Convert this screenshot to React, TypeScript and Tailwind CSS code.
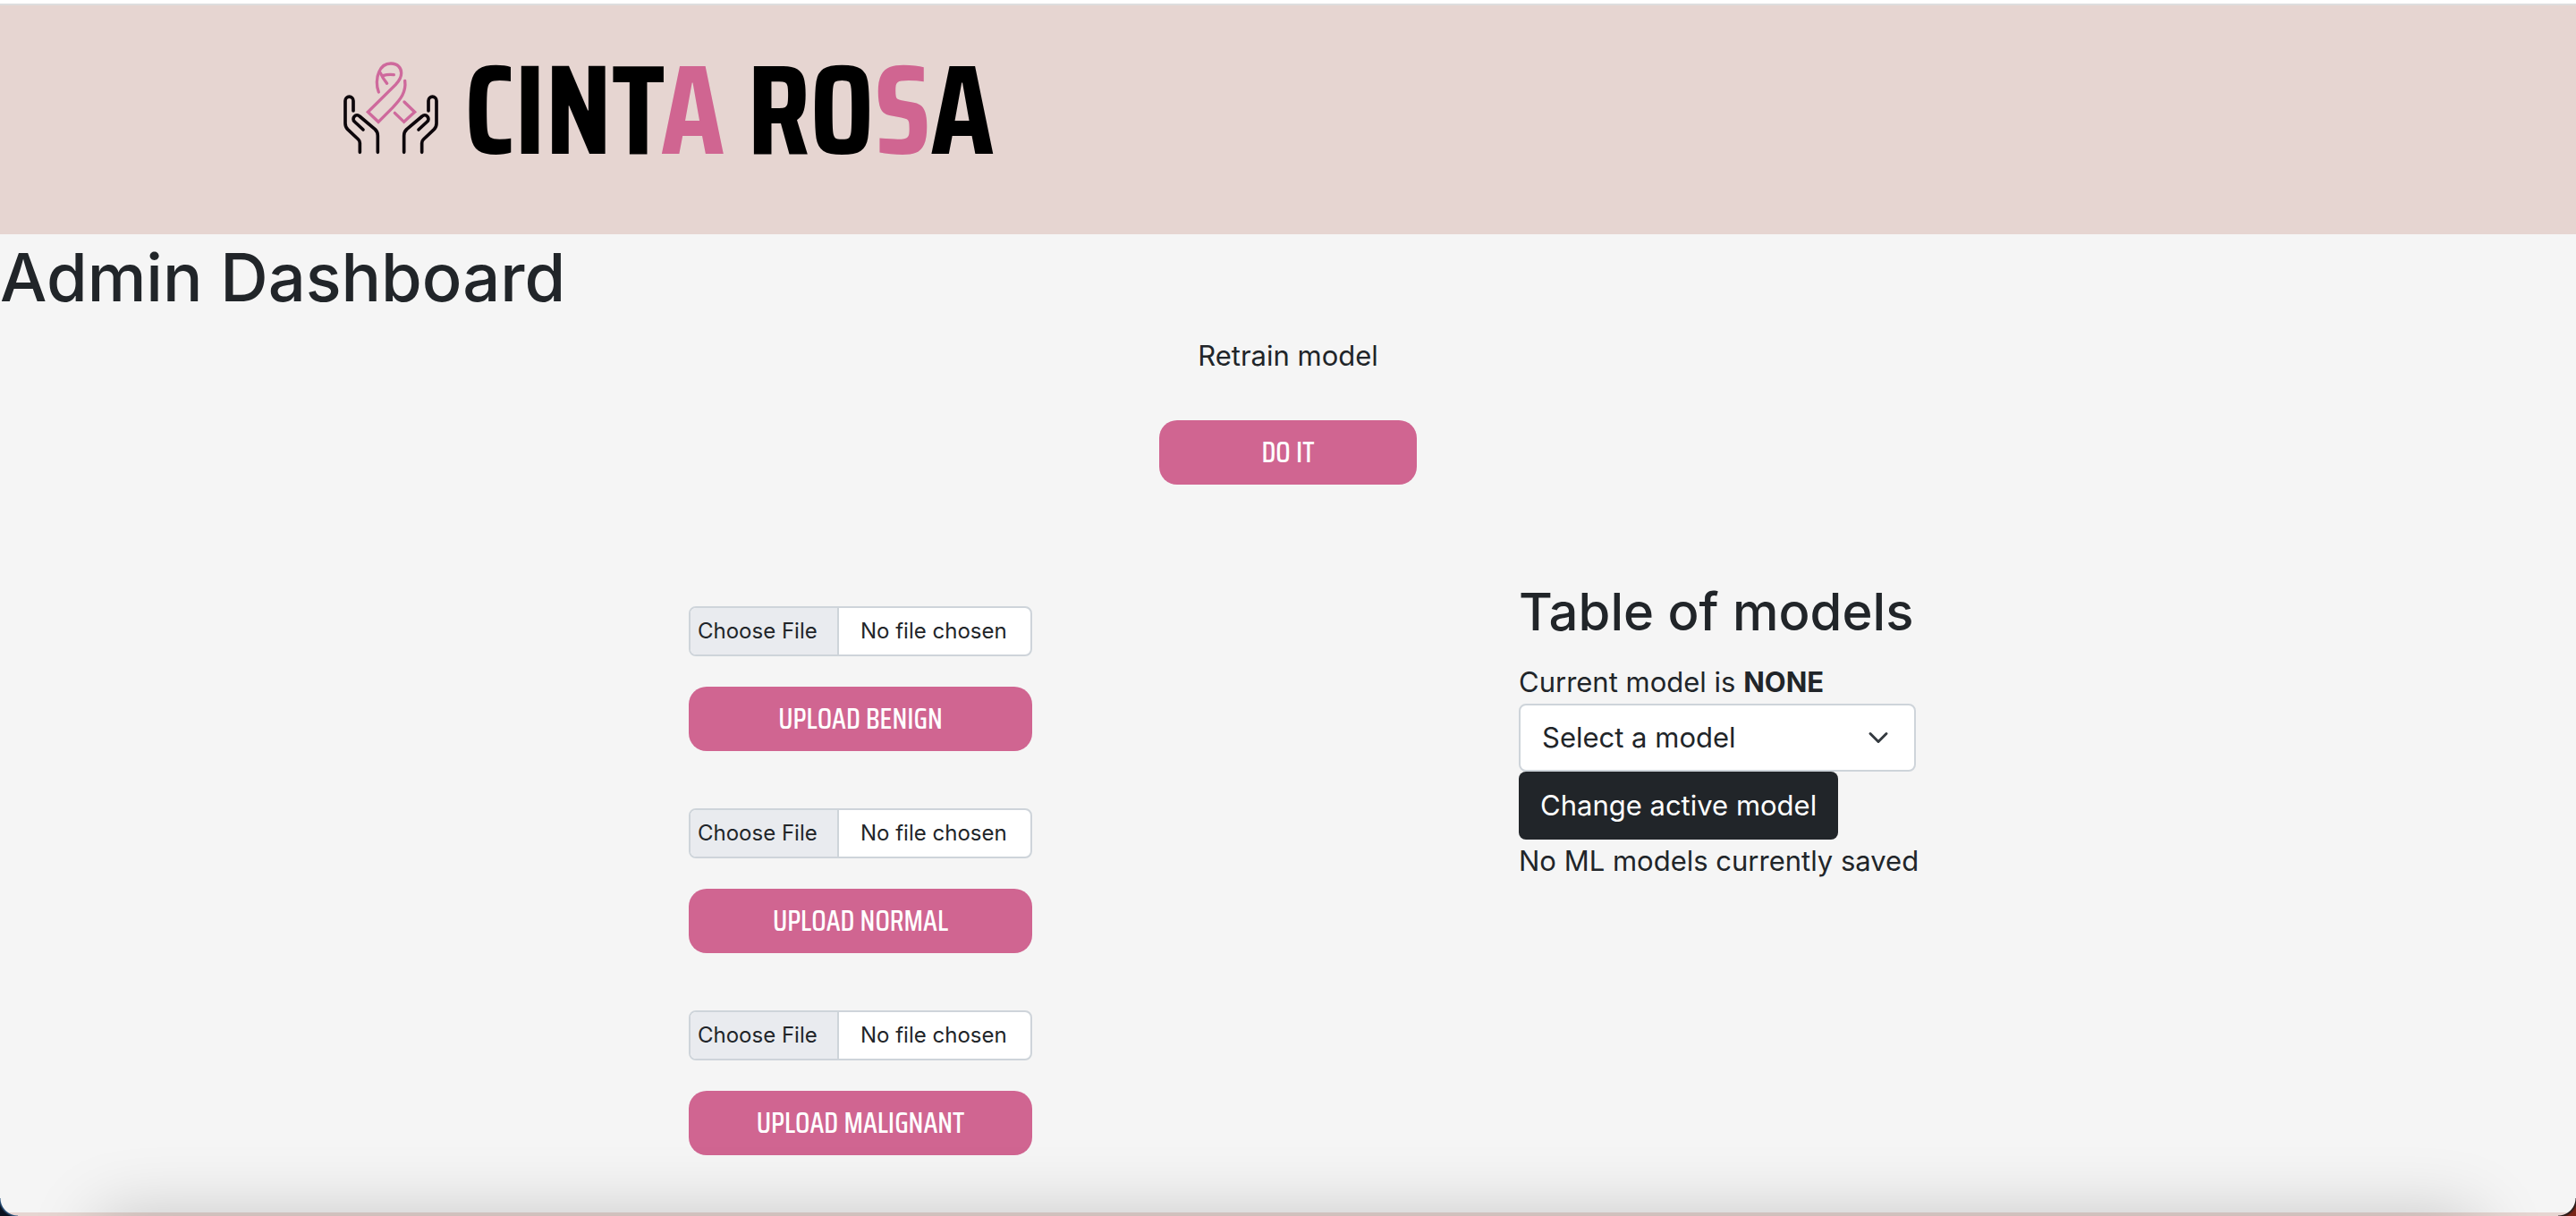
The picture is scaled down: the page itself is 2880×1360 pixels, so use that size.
import { ChevronDown } from "lucide-react";

const pinkButton =
  "h-[72px] rounded-[20px] bg-[#d06591] font-['Saira_Condensed','Roboto_Condensed','Liberation_Sans',sans-serif] text-[32px] leading-none font-medium text-white";

function Hand() {
  return (
    <>
      <path d="M106 223V189a13.5 13.5 0 0 0-27 0V265Q79 277 87 285L123 319Q128 324 128 331V362" />
      <path d="M139 286L110 259A12 12 0 0 1 127 241L179 285Q188 294 188 306V362" />
    </>
  );
}

function Logo() {
  return (
    <svg
      viewBox="70 55 324 315"
      className="h-[105px] w-[108px] shrink-0"
      fill="none"
      strokeWidth="11"
      strokeLinecap="round"
      strokeLinejoin="round"
      aria-hidden="true"
    >
      <g stroke="#0d060b">
        <Hand />
        <g transform="translate(464 0) scale(-1 1)">
          <Hand />
        </g>
      </g>
      <g stroke="#ce699c" strokeWidth="10" strokeLinejoin="miter">
        <path d="M191 160C183 140 183 112 192 93C200 73 214 64 232 64C255 64 267 79 267 96C267 112 258 124 248 135L155 227L190 260L238 212C265 184 284 160 279 122" />
        <path d="M242 102C230 100 218 101 205 105M197 96C203 110 210 120 219 131" />
        <path d="M277 193L312 227L276 260L245 230" />
      </g>
    </svg>
  );
}

function Upload({ kind }: { kind: string }) {
  return (
    <form className="flex w-96 flex-col gap-[34px]" onSubmit={(e) => e.preventDefault()}>
      <input
        type="file"
        aria-label={`File for ${kind}`}
        className="h-14 w-full rounded-lg border-2 border-[#ced4da] bg-white text-2xl leading-[52px] text-[#212529] file:mr-6 file:h-[52px] file:w-[166px] file:border-r-2 file:border-[#ced4da] file:bg-[#e9ebef] file:pr-6 file:pl-2 file:text-2xl file:text-[#212529]"
      />
      <button type="submit" className={pinkButton}>
        UPLOAD {kind}
      </button>
    </form>
  );
}

export default function App() {
  return (
    <div className="relative flex min-h-screen flex-col overflow-hidden bg-[#f5f5f5] font-['Inter',sans-serif] text-[31px] leading-[48px] text-[#212529]">
      <div className="h-1.5 border-b-2 border-[#dedede] bg-white" />
      <header className="flex h-64 items-start gap-7 bg-[#e6d5d1] pt-[62px] pl-[383px]">
        <Logo />
        <div className="font-['Saira_Condensed','Roboto_Condensed','Liberation_Sans',sans-serif] text-[142px] leading-[110px] font-bold whitespace-nowrap text-black">
          CINT<span className="text-[#d06591]">A</span> RO<span className="text-[#d06591]">S</span>A
        </div>
      </header>
      <main>
        <h1 className="text-[74px] leading-[96px] font-medium">Admin Dashboard</h1>
        <form className="mt-4 flex flex-col items-center gap-12" onSubmit={(e) => e.preventDefault()}>
          <p>Retrain model</p>
          <button type="submit" className={`${pinkButton} w-72`}>
            DO IT
          </button>
        </form>
        <div className="mx-auto mt-[104px] grid w-2/3 grid-cols-2 items-start justify-items-center">
          <div className="mt-8 flex flex-col gap-16 pl-1">
            <Upload kind="BENIGN" />
            <Upload kind="NORMAL" />
            <Upload kind="MALIGNANT" />
          </div>
          <section className="flex w-[444px] flex-col items-start whitespace-nowrap">
            <h2 className="mb-4 text-[58px] leading-[77px] font-medium">Table of models</h2>
            <p>
              Current model is <strong className="font-bold">NONE</strong>
            </p>
            <div className="relative w-full">
              <select
                aria-label="Select a model"
                className="block h-[76px] w-full appearance-none rounded-lg border-2 border-[#ced4da] bg-white pr-20 pl-6"
              >
                <option>Select a model</option>
              </select>
              <ChevronDown
                className="pointer-events-none absolute top-5 right-6 size-9 text-[#343a40]"
                strokeWidth={2}
                aria-hidden="true"
              />
            </div>
            <button type="button" className="h-[76px] rounded-lg bg-[#212529] px-6 text-white">
              Change active model
            </button>
            <p>No ML models currently saved</p>
          </section>
        </div>
      </main>
      <footer className="mt-auto h-1 bg-[#e6d5d1]" />
      <div className="pointer-events-none absolute inset-x-[110px] top-full h-24 shadow-[0_0_80px_rgba(0,0,0,0.2)]" />
      <div className="pointer-events-none absolute bottom-0 left-0 size-5 bg-[radial-gradient(circle_at_100%_0%,transparent_19px,#2f5680_20px,#0a1220_22px)]" />
      <div className="pointer-events-none absolute right-0 bottom-0 size-5 bg-[radial-gradient(circle_at_0%_0%,transparent_19px,#201a1a_20px,#7a2416_23px)]" />
    </div>
  );
}
